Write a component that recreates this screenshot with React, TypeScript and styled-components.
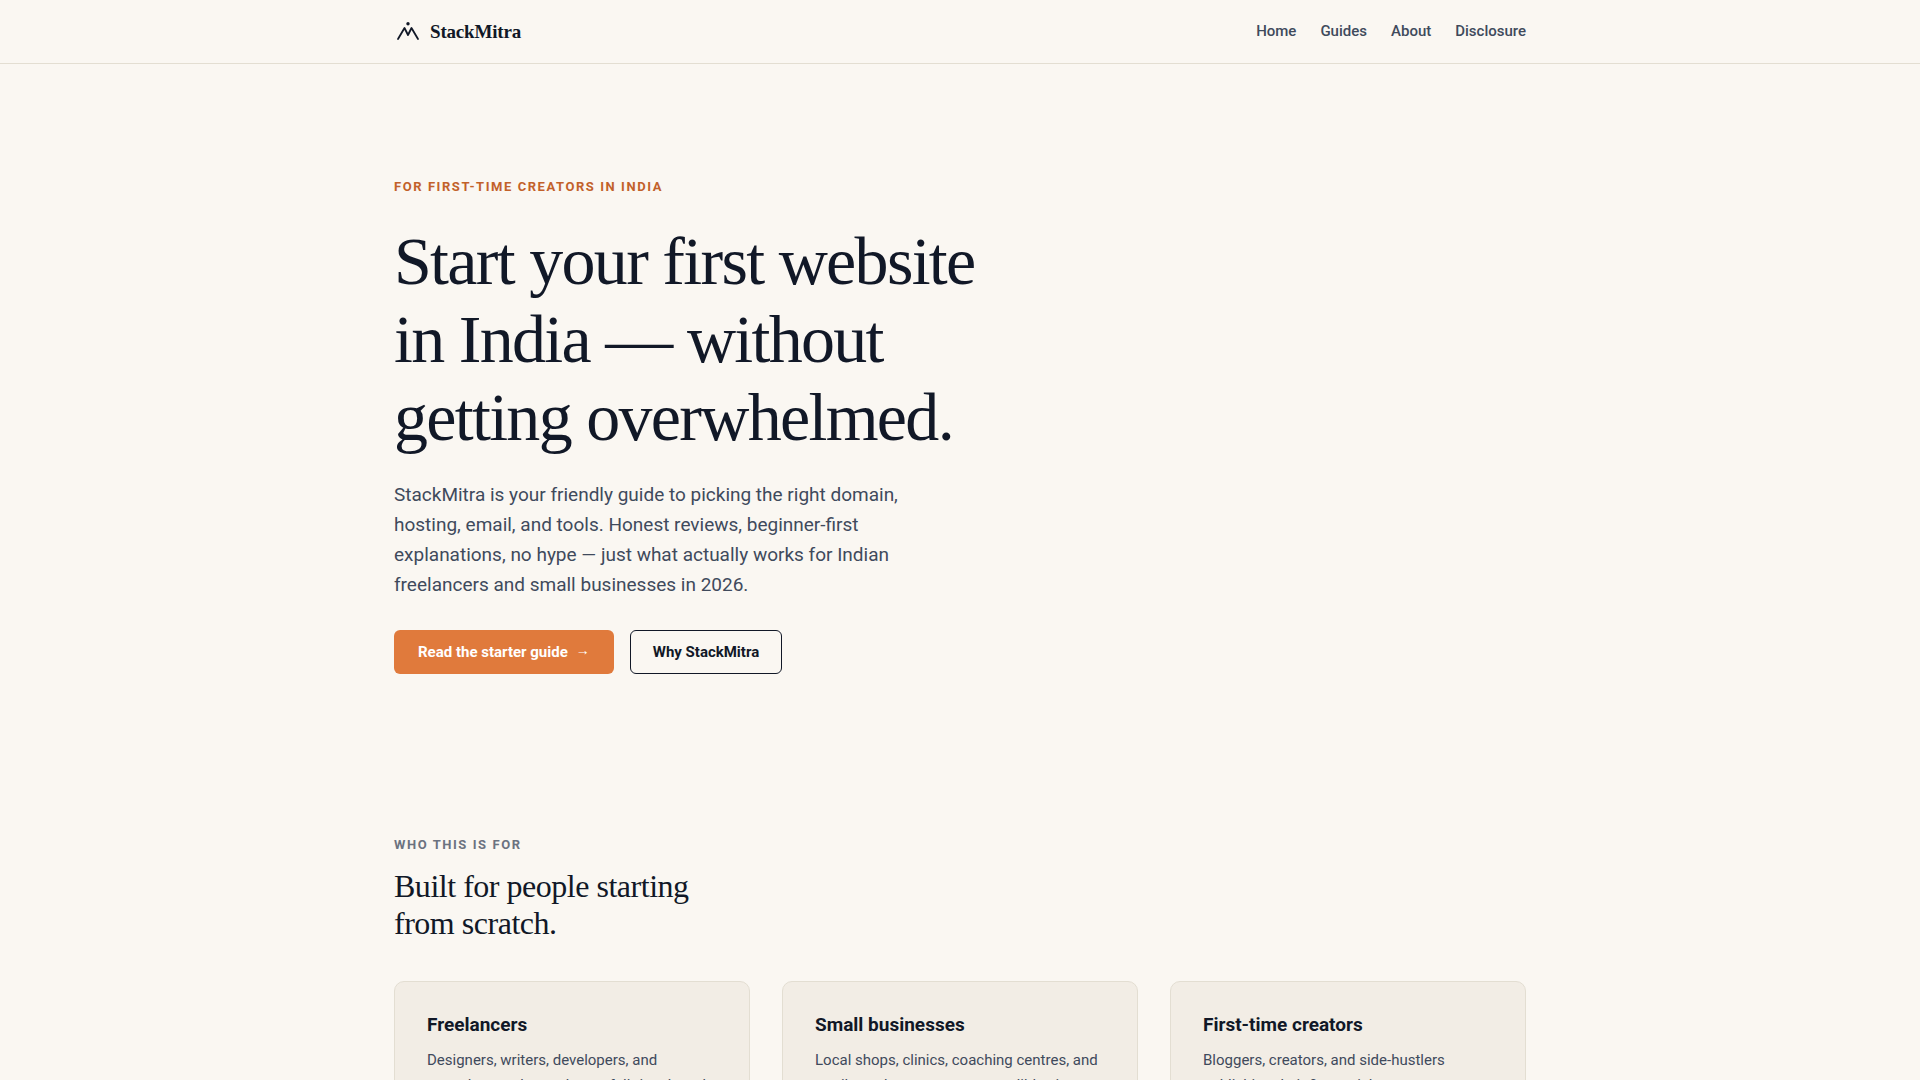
import React from "react";
import styled, { createGlobalStyle } from "styled-components";

const color = {
  page: "#faf7f2",
  ink: "#111827",
  body: "#3f4a5c",
  muted: "#6b7280",
  line: "#e3ded2",
  panel: "#f2ede5",
  accent: "#e07a3c",
  accentDark: "#c2612a",
};

const sans = `Roboto, "Liberation Sans", sans-serif`;
const serif = `"Liberation Serif", serif`;

const GlobalStyle = createGlobalStyle`
  *, *::before, *::after { box-sizing: border-box; }
  html { scrollbar-width: none; }
  body {
    margin: 0;
    background: ${color.page};
    color: ${color.body};
    font-family: ${sans};
    font-size: 16px;
  }
`;

const Container = styled.div`
  width: 100%;
  max-width: 1180px;
  margin: 0 auto;
  padding: 0 24px;
`;

const Header = styled.header`
  border-bottom: 1px solid ${color.line};
`;

const HeaderRow = styled(Container)`
  display: flex;
  align-items: center;
  justify-content: space-between;
  padding-top: 16px;
  padding-bottom: 16px;
`;

const Brand = styled.a`
  display: inline-flex;
  align-items: center;
  gap: 8px;
  color: ${color.ink};
  font-family: ${serif};
  font-size: 19px;
  font-weight: 700;
  line-height: 31px;
  letter-spacing: -0.01em;
  text-decoration: none;
`;

const Nav = styled.nav`
  display: flex;
  gap: 24px;
`;

const NavLink = styled.a`
  color: ${color.body};
  font-size: 15px;
  font-weight: 500;
  line-height: 23px;
  text-decoration: none;
`;

const Hero = styled.section`
  padding: 112px 0 96px;
`;

const Eyebrow = styled.p<{ $accent?: boolean }>`
  margin: 0;
  color: ${(p) => (p.$accent ? color.accentDark : color.muted)};
  font-size: 13px;
  font-weight: 700;
  line-height: 22px;
  letter-spacing: 0.12em;
  text-transform: uppercase;
`;

const Title = styled.h1`
  max-width: 640px;
  margin: 24px 0 0;
  color: ${color.ink};
  font-family: ${serif};
  font-size: 68px;
  font-weight: 400;
  line-height: 78px;
  letter-spacing: -0.025em;
`;

const Lead = styled.p`
  max-width: 540px;
  margin: 24px 0 0;
  font-size: 19px;
  line-height: 30px;
`;

const Actions = styled.div`
  display: flex;
  flex-wrap: wrap;
  gap: 16px;
  margin-top: 30px;
`;

const Button = styled.a<{ $primary?: boolean }>`
  display: inline-flex;
  align-items: center;
  gap: 8px;
  padding: ${(p) => (p.$primary ? "10px 24px" : "9px 22px")};
  border: ${(p) => (p.$primary ? "none" : `1px solid ${color.ink}`)};
  border-radius: 6px;
  background: ${(p) => (p.$primary ? color.accent : "transparent")};
  color: ${(p) => (p.$primary ? "#ffffff" : color.ink)};
  font-size: 15px;
  font-weight: 700;
  line-height: 24px;
  text-decoration: none;
`;

const Arrow = styled.span`
  align-self: flex-start;
  font-family: ${serif};
  font-size: 14px;
  font-weight: 400;
  line-height: 22px;
`;

const Audience = styled.section`
  padding: 64px 0 96px;
`;

const SectionTitle = styled.h2`
  max-width: 340px;
  margin: 12px 0 0;
  color: ${color.ink};
  font-family: ${serif};
  font-size: 32px;
  font-weight: 400;
  line-height: 37px;
  letter-spacing: -0.015em;
`;

const Cards = styled.div`
  display: grid;
  grid-template-columns: repeat(auto-fit, minmax(280px, 1fr));
  gap: 32px;
  margin-top: 39px;
`;

const Card = styled.article`
  padding: 32px;
  border: 1px solid ${color.line};
  border-radius: 10px;
  background: ${color.panel};
`;

const CardTitle = styled.h3`
  margin: 0;
  color: ${color.ink};
  font-size: 19px;
  font-weight: 700;
  line-height: 22px;
`;

const CardText = styled.p`
  margin: 12px 0 0;
  font-size: 15px;
  line-height: 25px;
`;

const Logo = () => (
  <svg width="28" height="28" viewBox="0 0 28 28" fill="none" aria-hidden="true">
    <path
      d="M4 21 L10.5 10 L14 17 L17.5 10 L24 21"
      stroke="currentColor"
      strokeWidth="1.8"
      strokeLinecap="round"
      strokeLinejoin="round"
    />
    <circle cx="14" cy="5.7" r="1.7" fill="currentColor" />
  </svg>
);

const links = ["Home", "Guides", "About", "Disclosure"];

const audiences = [
  {
    title: "Freelancers",
    text: "Designers, writers, developers, and consultants who work on a full-time brand.",
  },
  {
    title: "Small businesses",
    text: "Local shops, clinics, coaching centres, and retailers who want a more credible site.",
  },
  {
    title: "First-time creators",
    text: "Bloggers, creators, and side-hustlers publishing their first article.",
  },
];

export default function App() {
  return (
    <>
      <GlobalStyle />
      <Header>
        <HeaderRow>
          <Brand href="#home">
            <Logo />
            <span>StackMitra</span>
          </Brand>
          <Nav aria-label="Main">
            {links.map((label) => (
              <NavLink key={label} href={`#${label.toLowerCase()}`}>
                {label}
              </NavLink>
            ))}
          </Nav>
        </HeaderRow>
      </Header>
      <main>
        <Hero>
          <Container>
            <Eyebrow $accent>For first-time creators in India</Eyebrow>
            <Title>Start your first website in India — without getting overwhelmed.</Title>
            <Lead>
              StackMitra is your friendly guide to picking the right domain, hosting, email, and
              tools. Honest reviews, beginner-first explanations, no hype — just what actually works
              for Indian freelancers and small businesses in 2026.
            </Lead>
            <Actions>
              <Button $primary href="#guides">
                Read the starter guide <Arrow aria-hidden="true">→</Arrow>
              </Button>
              <Button href="#about">Why StackMitra</Button>
            </Actions>
          </Container>
        </Hero>
        <Audience>
          <Container>
            <Eyebrow>Who this is for</Eyebrow>
            <SectionTitle>Built for people starting from scratch.</SectionTitle>
            <Cards>
              {audiences.map((a) => (
                <Card key={a.title}>
                  <CardTitle>{a.title}</CardTitle>
                  <CardText>{a.text}</CardText>
                </Card>
              ))}
            </Cards>
          </Container>
        </Audience>
      </main>
    </>
  );
}
